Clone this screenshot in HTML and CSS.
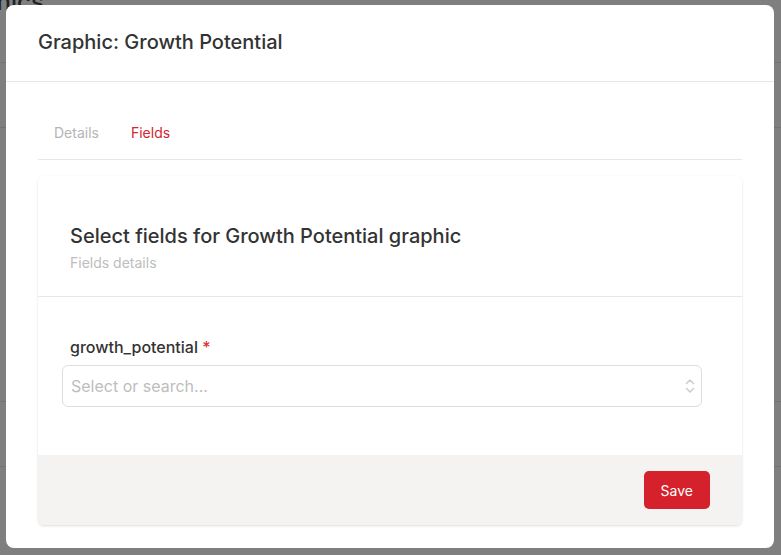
FILE: index.html
```html
<!DOCTYPE html>
<html lang="en">
<head>
<meta charset="utf-8">
<title>Graphic: Growth Potential</title>
<link rel="stylesheet" href="styles.css">
</head>
<body>
<div class="page">
  <div class="page-head">
    <h1 class="page-title">Graphics</h1>
    <div class="page-sub">Manage</div>
  </div>
  <div class="page-row"></div>
  <div class="page-row tall"></div>
  <div class="page-row"></div>
</div>
<div class="overlay"></div>
<div class="modal">
  <div class="modal-header">
    <h2 class="modal-title">Graphic: Growth Potential</h2>
  </div>
  <div class="modal-body">
    <div class="tabs">
      <div class="tab">Details</div>
      <div class="tab active">Fields</div>
    </div>
    <div class="card">
      <div class="card-header">
        <h3 class="card-title">Select fields for Growth Potential graphic</h3>
        <div class="card-sub">Fields details</div>
      </div>
      <div class="card-body">
        <label class="field-label">growth_potential <span class="req">*</span></label>
        <div class="select">
          <span class="placeholder">Select or search...</span>
          <svg class="chev" width="10" height="16" viewBox="0 0 10 16" fill="none" stroke="#cccccc" stroke-width="1.5" stroke-linecap="round" stroke-linejoin="round"><path d="M1.5 5.5 L5 2 L8.5 5.5"/><path d="M1.5 10.5 L5 14 L8.5 10.5"/></svg>
        </div>
      </div>
      <div class="card-footer">
        <button class="btn-save">Save</button>
      </div>
    </div>
  </div>
</div>
</body>
</html>
```
FILE: styles.css
```css
* { box-sizing: border-box; }
html, body { margin: 0; padding: 0; }
body {
  font-family: Inter, "Noto Sans", "Liberation Sans", sans-serif;
  background: #ffffff;
  width: 781px;
  height: 555px;
  overflow: hidden;
}
.page { padding: 0; }
.page-head { margin-left: -59px; margin-top: -13px; height: 76px; border-bottom: 1px solid #e6e6e6; }
.page-title { margin: 0; font-size: 24px; font-weight: 500; color: #444; line-height: 30px; }
.page-sub { font-size: 14px; color: #bbb; line-height: 20px; margin-top: 0; }
.page-row { height: 65px; border-bottom: 1px solid #e6e6e6; }
.page-row.tall { height: 274px; }
.overlay { position: fixed; inset: 0; background: rgba(0, 0, 0, 0.5); }
.modal {
  position: fixed;
  top: 5px;
  left: 6px;
  width: 768px;
  height: 543px;
  background: #fff;
  border-radius: 8px;
  display: flex;
  flex-direction: column;
}
.modal-header {
  padding: 23px 32px 25px;
  border-bottom: 1px solid #e7e7e7;
}
.modal-title {
  margin: 0;
  font-size: 20px;
  line-height: 28px;
  font-weight: 500;
  color: #333;
}
.modal-body { padding: 25px 32px 24px; }
.tabs {
  display: flex;
  border-bottom: 1px solid #e7e7e7;
}
.tab {
  padding: 16px 16px;
  font-size: 14px;
  line-height: 20px;
  color: #b5b5b5;
}
.tab.active { color: #d42530; }
.card {
  margin-top: 16px;
  border-radius: 6px;
  background: #fff;
  box-shadow: 0 1px 3px rgba(0, 0, 0, 0.1), 0 1px 2px rgba(0, 0, 0, 0.04);
  overflow: hidden;
}
.card-header {
  padding: 46px 32px 23px;
  border-bottom: 1px solid #e7e7e7;
}
.card-title {
  margin: 0;
  font-size: 20px;
  line-height: 28px;
  font-weight: 500;
  color: #333;
}
.card-sub {
  margin-top: 3px;
  font-size: 14px;
  line-height: 20px;
  color: #bdbdbd;
}
.card-body {
  padding: 40px 40px 48px 24px;
  display: flex;
  flex-direction: column;
}
.field-label {
  margin-left: 8px;
  margin-bottom: 8px;
  font-size: 16px;
  line-height: 20px;
  font-weight: 500;
  color: #333;
}
.req { color: #e0303a; }
.select {
  height: 42px;
  border: 1px solid #dddddd;
  border-radius: 6px;
  display: flex;
  align-items: center;
  justify-content: space-between;
  padding: 0 6px 0 8px;
}
.placeholder { font-size: 16px; color: #bdbdbd; }
.card-footer {
  background: #f4f3f2;
  padding: 16px 32px;
  display: flex;
  justify-content: flex-end;
}
.btn-save {
  height: 38px;
  padding: 0 17px;
  border: none;
  border-radius: 5px;
  background: #d4212b;
  color: #fff;
  font-family: inherit;
  font-size: 14px;
}
```
